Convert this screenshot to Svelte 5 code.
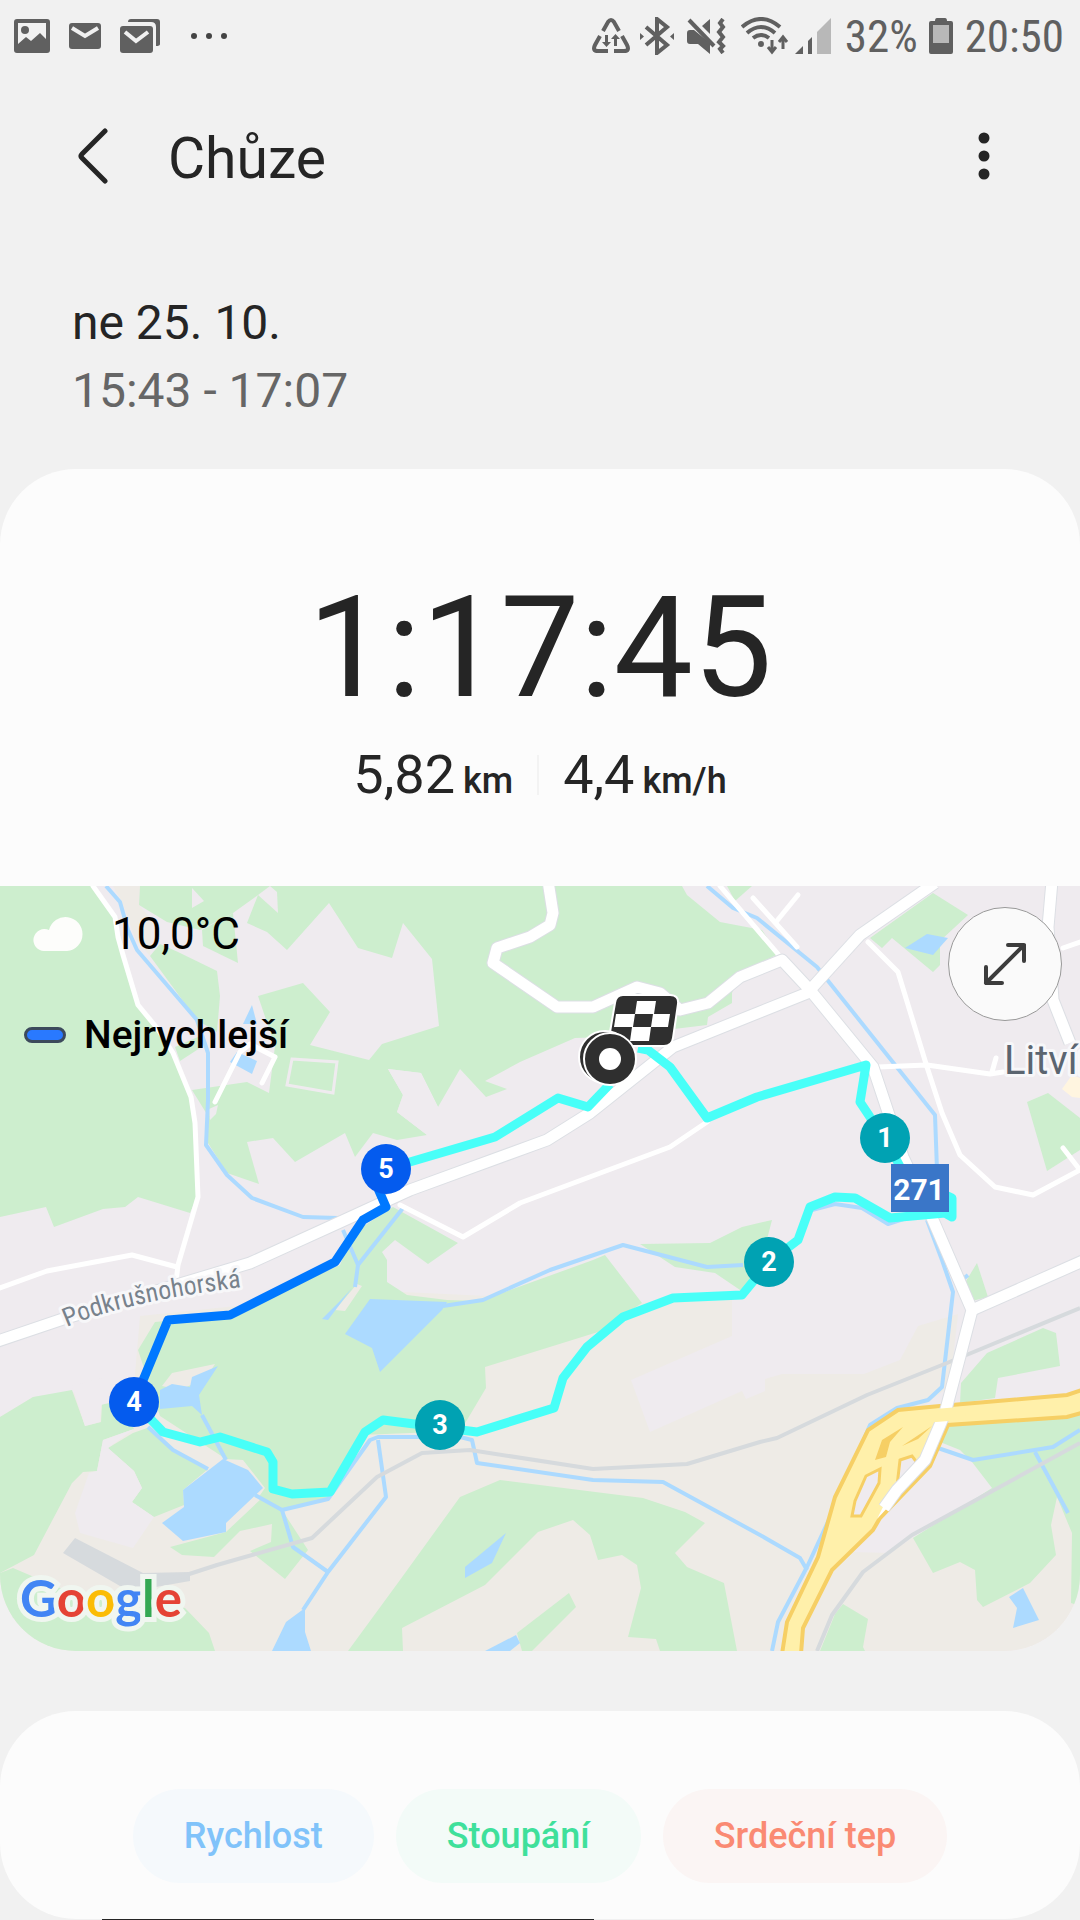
<script lang="ts">
	type Marker = { label: string; x: number; y: number; fast?: boolean };

	const rural = [
		'113,0 140,0 139,19 152,34 150,70 135,52 122,16',
		'140,430 380,405 642,417 732,410 732,450 631,494 650,546 742,505 746,513 765,505 765,493 782,488 864,488 900,474 918,440 958,428 950,500 870,560 850,666 890,667 915,650 1080,570 1080,765 0,765 0,531 33,511 134,500',
	];

	const urban = [
		'192,2 204,15 192,22',
		'258,9 270,0 277,6 278,27',
		'388,183 421,187 438,221 427,249 397,226 403,209',
		'103,554 134,543 108,562 134,585 142,602 132,616 154,631 133,662 80,647 75,627 89,587 97,585',
		'72,500 110,490 115,515 101,519 100,536 85,540',
		'209,223 218,219 216,228 210,234',
	];

	const green = [
		'0,0 93,0 115,31 118,51 123,69 138,119 157,142 173,167 191,211 195,237 197,311 190,327 138,311 125,321 103,323 54,341 46,321 0,331',
		'140,0 682,0 687,9 720,36 762,44 778,68 740,88 732,107 732,117 708,131 707,139 608,151 575,152 520,176 485,195 507,203 486,211 460,183 438,221 421,187 388,183 403,209 397,226 427,249 397,254 373,247 355,271 345,247 295,276 273,252 247,256 259,298 227,287 208,257 208,230 192,204 247,196 269,207 275,160 258,110 303,97 330,126 310,159 369,174 382,158 439,140 432,73 403,37 392,72 358,62 329,17 287,64 267,46 247,37 258,9 233,27 200,44 167,36 139,19',
		'150,70 160,58 178,66 217,85 220,110 217,146 197,134',
		'202,44 233,27 238,77 203,60',
		'175,161 200,150 200,162 180,175',
		'727,0 752,0 735,15',
		'933,7 968,29 940,55 940,79 933,86 892,52 882,62 870,52',
		'1027,216 1048,207 1080,232 1080,264 1047,285',
		'640,358 710,357 742,341 772,334 764,365 743,406 715,387 675,381',
		'138,464 155,436 230,429 340,379 353,347 393,321 458,357 428,378 395,354 382,366 387,374 387,396 407,409 447,414 480,415 593,374 605,369 642,417 598,446 485,481 486,502 467,534 460,545 360,549 328,614 282,624 255,609 263,602 248,584 223,571 160,530 147,491',
		'0,531 33,511 72,504 85,540 101,536 102,518 120,516 134,543 103,554 97,585 83,586 72,597 34,669 0,687',
		'108,562 133,547 150,541 173,564 208,583 183,604 184,619 154,631 132,616 142,602 134,585',
		'0,687 13,682 60,702 185,722 209,747 215,765 0,765',
		'170,661 226,646 262,612 282,624 308,664 285,693 250,665 271,656 272,638 240,645 214,671 182,669',
		'348,765 400,694 460,611 500,594 643,612 685,626 705,637 675,667 687,681 724,697 737,765 660,765 656,753 628,751 641,702 637,679 622,669 598,674 590,649 573,634 538,646 485,699 402,742 403,765',
		'517,747 569,707 576,721 532,765 522,765',
		'977,377 988,411 972,415 963,400',
		'960,517 961,497 987,467 1043,442 1056,447 1060,480 998,492 995,512',
		'943,541 1080,527 1080,720 1071,717 1072,647 1057,611 1051,639 1056,669 1030,697 983,721 977,714 975,684 960,676 933,687 913,652 992,602 972,576 960,564 940,556',
		'843,718 868,733 863,761 865,765 820,765 835,728',
	];

	const water = [
		'252,119 243,138 257,138',
		'237,166 257,175 252,188 230,176',
		'927,48 948,52 933,69 905,62',
		'370,413 447,416 442,424 380,486 372,462 345,448',
		'160,504 172,498 190,501 192,491 218,480 199,509 202,529 192,520 160,523',
		'223,573 248,584 263,602 226,637 226,646 183,655 162,637 184,621 183,604',
		'305,722 305,746 311,765 272,765 286,736',
		'465,681 506,647 492,677 465,692',
		'485,765 516,749 520,757 510,765',
		'1023,702 1039,734 1013,742 1017,722 1009,711',
		'352,402 340,415 322,433 328,434',
	];

	const streams = [
		'106,0 120,16 128,44 137,64 197,134 208,167 208,214 206,259 227,289 252,312 303,331 338,332',
		'343,344 358,379 403,322',
		'355,401 358,379',
		'707,0 733,22 757,32 817,81 935,229 937,284 950,320',
		'927,334 942,374 953,406 942,501 928,514 897,522 870,539 840,610 807,681 778,736 772,765',
		'812,324 835,318 862,322 888,338 950,318',
		'443,420 483,414 550,384 623,359 707,381 743,379',
		'202,529 226,574',
		'148,541 173,564 208,583',
		'255,609 282,624 328,613 370,554 378,551 460,551 472,554 477,577 593,594 663,596 760,649 800,672 807,684',
		'282,624 293,661 328,686',
		'378,554 386,611 328,686 303,724',
		'938,562 973,574 1053,561 1080,544',
		'1035,566 1068,627',
		'962,394 968,389',
	];

	const rails = [
		'140,693 180,691 217,679 312,652 377,591 422,567 470,564 593,583 687,578 760,556 777,552 867,509 947,477 1080,422',
		'817,765 832,729 863,686 912,649 1080,557',
	];

	const lanes = [
		'93,0 115,31 118,51 123,69 138,119 157,142 173,167 191,211 195,237 198,311 178,379 176,396',
		'0,402 47,385 132,369 177,381',
		'215,216 240,166 250,158 275,171 262,197',
		'400,319 463,351 520,317 670,261 707,236',
		'720,0 778,68',
		'753,12 797,61',
		'776,36 798,9',
		'868,56 898,86 927,181 942,227 960,269 995,301 1033,309 1080,284 1063,262',
		'878,181 927,179 990,188 1003,186',
		'992,186 996,172',
		'1063,62 1080,56',
	];

	const roads = [
		'-5,456 63,433 250,377 338,337 410,304 547,254 590,227 673,161 760,126 810,106',
		'548,-5 553,27 550,39 530,51 497,62 493,77 557,121 593,121 637,101 660,107 680,124 708,117 740,91 782,74 810,104 873,181 903,271 933,334 972,424 960,470 945,527 925,574 897,604 884,622',
		'810,104 860,49 935,-3',
		'972,424 1085,374',
		'1052,-5 1048,41 1053,114 1070,157',
	];

	const route = [
		'638,162 648,164 670,181 707,232 757,211 866,179 860,216 870,231 885,252 905,290 952,312 952,331 945,327 923,329 890,332 855,312 835,311 810,321 798,354 769,376 742,409 673,412 623,431 587,461 563,492 554,522 477,546 383,534 365,546 330,606 292,608 273,603 273,576 267,566 220,551 200,556 163,546 134,516',
		'386,283 495,251 558,212 588,221 610,198',
	];
	const fastest = '134,516 168,434 230,429 335,376 363,334 386,321 376,298';

	const markers: Marker[] = [
		{ label: '1', x: 885, y: 252 },
		{ label: '2', x: 769, y: 376 },
		{ label: '3', x: 440, y: 539 },
		{ label: '4', x: 134, y: 516, fast: true },
		{ label: '5', x: 386, y: 283, fast: true },
	];

	const charts = [
		{ name: 'Rychlost', tone: 'speed' },
		{ name: 'Stoupání', tone: 'climb' },
		{ name: 'Srdeční tep', tone: 'heart' },
	];
</script>

<div class="page">
	<div class="status">
		<div class="notices">
			<svg width="36" height="34" viewBox="0 0 36 34">
				<path d="M3 0h30a3 3 0 0 1 3 3v28a3 3 0 0 1-3 3H3a3 3 0 0 1-3-3V3a3 3 0 0 1 3-3zm1 4v21l8-7 5 4 9-8 6 6V4z" fill-rule="evenodd" />
				<circle cx="11" cy="11" r="4" />
			</svg>
			<svg width="32" height="26" viewBox="0 0 32 26">
				<rect width="32" height="26" rx="3" />
				<path class="cut" d="M3 5l13 8 13-8" />
			</svg>
			<svg width="40" height="34" viewBox="0 0 40 34">
				<path d="M8 3q0-3 3-3h26q3 0 3 3v22q0 2-4 2V8q0-5-5-5z" />
				<rect y="7" width="33" height="27" rx="3" />
				<path class="cut" d="M5 13l11 9 12-9" />
			</svg>
			<svg class="more" width="36" height="6" viewBox="0 0 36 6">
				<circle cx="3" cy="3" r="3" />
				<circle cx="18" cy="3" r="3" />
				<circle cx="33" cy="3" r="3" />
			</svg>
		</div>
		<div class="system">
			<svg width="38" height="36" viewBox="0 0 38 36">
				<path class="line" d="M11 13l5-9q3-4 6 0l5 9M8 18l-5 9q-3 6 3 6h10M30 18l5 9q3 6-3 6H22" />
				<path d="M13 17h3v7h3l-4.500 5-4.500-5h3zM22 28h3v-7h3l-4.500-5-4.500 5h3z" />
			</svg>
			<svg class="bt" width="34" height="38" viewBox="0 0 34 38">
				<path class="line" d="M6 10l21 18-10 8V2l10 8L6 28" />
				<path d="M0 16v7l4-3.500zM34 16v7l-4-3.500z" />
			</svg>
			<svg class="mute" width="40" height="36" viewBox="0 0 40 36">
				<path d="M0 15q0-3 3-3h4l16 13v11L11 26H3q-3 0-3-3zM23 1v15l-8-8z" />
				<path class="line" d="M2 2l25 26" />
				<path class="line" d="M36 1l-3 4 3 4-4 5 4 5-4 5 4 4-3 3 3 4" />
			</svg>
			<svg class="wifi" width="48" height="38" viewBox="0 0 48 38">
				<path class="line" d="M1 10Q20-6 39 10M6 16q14-12 28 0M12 21q8-6 16 0" />
				<circle cx="20" cy="27" r="3" />
				<path class="line thin" d="M31 23v12M27 30l4 5 4-5M42 32V20M38 25l4-5 4 5" />
			</svg>
			<svg width="36" height="36" viewBox="0 0 36 36">
				<path d="M0 36h8v-8zM13 36h4V19l-4 4z" />
				<path class="faint" d="M22 36h14V0L22 14z" />
			</svg>
			<span class="percent">32%</span>
			<svg class="battery" width="24" height="36" viewBox="0 0 24 36">
				<path d="M6 3q0-3 2-3h8q2 0 2 3h4q2 0 2 2v29q0 2-2 2H2q-2 0-2-2V5q0-2 2-2z" />
				<path class="faint" d="M4 7h16v18H4z" />
			</svg>
			<span>20:50</span>
		</div>
	</div>

	<header>
		<button class="icon-button" aria-label="Zpět">
			<svg width="30" height="56" viewBox="0 0 30 56">
				<path d="M27 3L4 26q-2 2 0 4l23 23" />
			</svg>
		</button>
		<h1>Chůze</h1>
		<button class="icon-button" aria-label="Další možnosti">
			<svg width="12" height="48" viewBox="0 0 12 48">
				<circle cx="6" cy="6" r="5.500" />
				<circle cx="6" cy="24" r="5.500" />
				<circle cx="6" cy="42" r="5.500" />
			</svg>
		</button>
	</header>

	<div class="when">
		<p>ne 25. 10.</p>
		<p class="hours">15:43 - 17:07</p>
	</div>

	<main>
		<section class="card">
			<div class="summary">
				<p class="duration">1:17:45</p>
				<div class="stats">
					<p>5,82<span class="unit">km</span></p>
					<span class="divider"></span>
					<p>4,4<span class="unit">km/h</span></p>
				</div>
			</div>

			<div class="map">
				<svg class="tiles" viewBox="0 0 1080 765">
					<rect class="urban" width="1080" height="765" />
					{#each rural as points}<polygon class="rural" {points} />{/each}
					{#each green as points}<polygon class="green" {points} />{/each}
					{#each urban as points}<polygon class="urban" {points} />{/each}

					<!-- shores -->
					<path class="rural" d="M162 500L172 487 215 478 206 492 180 504zM335 424L357 398 362 400 345 425zM226 573L243 574 265 602 258 612z" />
					<polygon class="pitch" points="292,173 337,176 333,207 287,199" />
					<polygon class="block" points="1062,203 1072,189 1080,192 1080,212 1072,211" />
					{#each water as points}<polygon class="water" {points} />{/each}
					{#each streams as points}<polyline class="stream" {points} />{/each}

					<polygon class="yard" points="75,652 143,687 190,686 190,695 150,702 120,700 63,667" />
					{#each rails as points}<polyline class="rail" {points} />{/each}
					{#each lanes as points}<polyline class="lane" {points} />{/each}

					<path class="highway" d="M782 768L787 736 818 671 835 611 868 544 898 524 940 520 1067 509 1085 503V526L1067 531 948 539 930 580 880 632 873 644 832 684 803 742 801 768z" />
					<path class="ramp" d="M875 574L882 554 903 541 890 556 886 571zM902 560L932 540 918 553z" />
					<path class="island" d="M866 590L880 583 879 597 861 630 852 630 855 615zM900 574L912 570 918 578 897 600z" />
					{#each roads as points}<polyline class="casing" {points} />{/each}
					{#each roads as points}<polyline class="road" {points} />{/each}
					<path class="taper" d="M893 601L901 607 877 633z" />
					<path class="overpass" d="M930 530L965 527" />

					<path id="street" d="M67 441Q128 414 260 399" fill="none" />
					<text class="street"><textPath href="#street">Podkrušnohorská</textPath></text>
					<text class="town" x="1004" y="188">Litvín</text>

					{#each route as points}<polyline class="route" {points} />{/each}
					<polyline class="route fast" points={fastest} />

					{#each markers as m}
						<circle class="marker" class:fast={m.fast} cx={m.x} cy={m.y} r="25" />
						<text class="number" x={m.x} y={m.y + 9}>{m.label}</text>
					{/each}

					<rect class="shield" x="891" y="278" width="58" height="48" />
					<text class="shield-text" x="919" y="314">271</text>

					<!-- finish flag and start point -->
					<path class="flag" d="M623 109H670q9 0 8 9l-5 34q-1 8-9 8H617q-9 0-8-8l6-35q1-8 8-8z" />
					<path class="check" d="M637 115h19l-2 13h16l-2 13h-17l-2 14h-19l2-14h-18l2-13h19zM635 128l-2 13h18l2-13z" fill-rule="evenodd" />
					<circle class="start" cx="605" cy="171" r="26" />
					<circle class="start" cx="610" cy="173" r="26" />
					<circle class="hole" cx="610" cy="173" r="11" />
				</svg>

				<div class="weather">
					<svg width="52" height="36" viewBox="0 0 52 36">
						<path d="M12 35a11 11 0 1 1 5-21 17 17 0 1 1 18 21z" />
					</svg>
					<span>10,0°C</span>
				</div>
				<div class="legend">
					<span class="swatch"></span>
					<span>Nejrychlejší</span>
				</div>
				<div class="logo">
					<span class="blue">G</span><span class="red">o</span><span class="yellow">o</span><span class="blue">g</span><span class="leaf">l</span><span class="red">e</span>
				</div>
				<button class="expand" aria-label="Zvětšit mapu">
					<svg width="48" height="48" viewBox="0 0 48 48">
						<path d="M5 43L43 5M27 5h16v16M5 27v16h16" />
					</svg>
				</button>
			</div>
		</section>

		<section class="card charts">
			{#each charts as chart}
				<button class="chip {chart.tone}">{chart.name}</button>
			{/each}
		</section>
		<div class="peek"></div>
	</main>
</div>

<style>
	:global(body) {
		margin: 0;
		background: #f1f1f1;
	}

	.page {
		color: #252525;
		font-family: Roboto, sans-serif;
		overflow: hidden;
	}

	p,
	h1 {
		margin: 0;
		font-weight: 400;
	}

	button {
		padding: 0;
		border: 0;
		background: none;
		font-family: inherit;
		cursor: pointer;
	}

	.status {
		display: flex;
		align-items: center;
		justify-content: space-between;
		height: 72px;
		padding: 0 16px 0 14px;
		color: #606060;
		font-family: 'Roboto Condensed', Roboto, sans-serif;
		font-size: 45px;
	}

	.status svg {
		fill: currentColor;
	}

	.status .line {
		fill: none;
		stroke: currentColor;
		stroke-width: 4;
	}

	.status .thin {
		stroke-width: 3;
	}

	.status .cut {
		fill: none;
		stroke: #f1f1f1;
		stroke-width: 4;
	}

	.status .faint {
		fill: #b8b8b8;
	}

	.notices,
	.system {
		display: flex;
		align-items: center;
	}

	.notices {
		gap: 19px;
	}

	.more {
		margin-left: 12px;
		color: #444;
	}

	.bt {
		margin-left: 10px;
	}

	.mute {
		margin-left: 13px;
	}

	.wifi {
		margin: 0 6px 0 14px;
	}

	.percent {
		margin-left: 14px;
	}

	.battery {
		margin: 0 12px 0 11px;
	}

	header {
		display: flex;
		align-items: center;
		height: 168px;
		padding: 0 68px 0 65px;
	}

	h1 {
		flex: 1;
		margin-left: 47px;
		padding-top: 4px;
		font-size: 57px;
	}

	.icon-button {
		display: flex;
		align-items: center;
		justify-content: center;
		width: 56px;
		height: 80px;
	}

	.icon-button path {
		fill: none;
		stroke: #252525;
		stroke-width: 5;
		stroke-linecap: round;
	}

	.icon-button circle {
		fill: #252525;
	}

	.when {
		padding: 49px 72px 44px;
		font-size: 48px;
		line-height: 68px;
	}

	.hours {
		color: #666;
	}

	.card {
		border-radius: 76px;
		background: #fcfcfc;
		overflow: hidden;
	}

	.summary {
		display: flex;
		flex-direction: column;
		align-items: center;
		gap: 4px;
		padding: 96px 0 71px;
	}

	.duration {
		font-size: 141px;
		line-height: 166px;
	}

	.stats {
		display: flex;
		align-items: center;
		gap: 24px;
		font-size: 54px;
		line-height: 80px;
	}

	.unit {
		margin-left: 8px;
		font-size: 36px;
		font-weight: 500;
		line-height: 40px;
	}

	.divider {
		width: 2px;
		height: 40px;
		background: #f3f3f3;
	}

	.map {
		position: relative;
	}

	.tiles {
		display: block;
		width: 100%;
	}

	.urban {
		fill: #efebef;
	}

	.rural {
		fill: #eeebe6;
	}

	.green {
		fill: #cdeece;
	}

	.water {
		fill: #acdaff;
	}

	.block {
		fill: #fff5e0;
	}

	.yard {
		fill: #d6dadd;
	}

	.pitch {
		fill: #cdeece;
		stroke: #efebef;
		stroke-width: 3;
	}

	polyline {
		fill: none;
		stroke-linejoin: round;
	}

	.stream {
		stroke: #acdaff;
		stroke-width: 4;
	}

	.rail {
		stroke: #d6dadd;
		stroke-width: 4;
	}

	.lane {
		stroke: #fff;
		stroke-width: 5;
		stroke-linecap: round;
	}

	.casing {
		stroke: #dcdfe4;
		stroke-width: 13;
	}

	.road {
		stroke: #fff;
		stroke-width: 11;
	}

	.taper {
		fill: #fff;
	}

	.highway {
		fill: #fff0aa;
		stroke: #f6cf65;
		stroke-width: 4;
	}

	.ramp {
		fill: #f6cf65;
	}

	.island {
		fill: #efebef;
		stroke: #f6cf65;
		stroke-width: 3;
	}

	.overpass {
		stroke: #fff0aa;
		stroke-width: 13;
	}

	.street,
	.town {
		stroke: #f7f7f9;
		stroke-linejoin: round;
		paint-order: stroke;
	}

	.street {
		fill: #78828c;
		stroke-width: 6;
		font-family: 'Roboto Condensed', Roboto, sans-serif;
		font-size: 26px;
	}

	.town {
		fill: #5b6570;
		stroke-width: 6;
		font-size: 40px;
	}

	.route {
		stroke: #48fff8;
		stroke-width: 9;
	}

	.route.fast {
		stroke: #0078ff;
	}

	.marker {
		fill: #00a2b3;
	}

	.marker.fast {
		fill: #045bee;
	}

	.number,
	.shield-text {
		fill: #fff;
		font-weight: 700;
		text-anchor: middle;
	}

	.number {
		font-size: 27px;
	}

	.shield {
		fill: #3a76c8;
	}

	.shield-text {
		font-size: 30px;
	}

	.flag,
	.start {
		fill: #2f2f2f;
		stroke: #fff;
		stroke-width: 2;
	}

	.check,
	.hole {
		fill: #fff;
	}

	.weather,
	.legend,
	.logo,
	.expand {
		position: absolute;
	}

	.weather {
		top: 24px;
		left: 32px;
		display: flex;
		align-items: center;
		gap: 28px;
		color: #000;
		font-size: 44px;
		line-height: 48px;
	}

	.weather path {
		fill: #fdfdfb;
	}

	.legend {
		top: 125px;
		left: 24px;
		display: flex;
		align-items: center;
		gap: 18px;
		color: #000;
		font-size: 39px;
		font-weight: 500;
		line-height: 48px;
	}

	.swatch {
		box-sizing: border-box;
		width: 42px;
		height: 16px;
		border: 3px solid #3c4a5c;
		border-radius: 8px;
		background: #2979ff;
	}

	.logo {
		bottom: 21px;
		left: 20px;
		font-family: Lato, sans-serif;
		font-size: 51px;
		font-weight: 700;
		line-height: 64px;
		paint-order: stroke;
		-webkit-text-stroke: 10px #f0f6f0;
	}

	.blue {
		color: #4285f4;
	}

	.red {
		color: #e54335;
	}

	.yellow {
		color: #fbbc05;
	}

	.leaf {
		color: #34a853;
	}

	.expand {
		top: 21px;
		right: 18px;
		display: flex;
		align-items: center;
		justify-content: center;
		width: 114px;
		height: 114px;
		border: 1px solid #999;
		border-radius: 50%;
		background: #fafafa;
	}

	.expand path {
		fill: none;
		stroke: #3c3c3c;
		stroke-width: 4;
		stroke-linecap: round;
		stroke-linejoin: round;
	}

	.charts {
		display: flex;
		justify-content: center;
		gap: 22px;
		margin-top: 60px;
		padding: 78px 0 36px;
	}

	.chip {
		height: 94px;
		padding: 0 51px;
		border-radius: 47px;
		font-size: 36px;
		font-weight: 500;
	}

	.speed {
		background: #f5f9fc;
		color: #80c3fa;
	}

	.climb {
		background: #f3fbf8;
		color: #3fe09b;
	}

	.heart {
		background: #fbf5f4;
		color: #fa8a73;
	}

	/* top edge of the graph tooltip below the fold */
	.peek {
		width: 492px;
		height: 1px;
		margin-left: 102px;
		background: #252525;
	}
</style>
